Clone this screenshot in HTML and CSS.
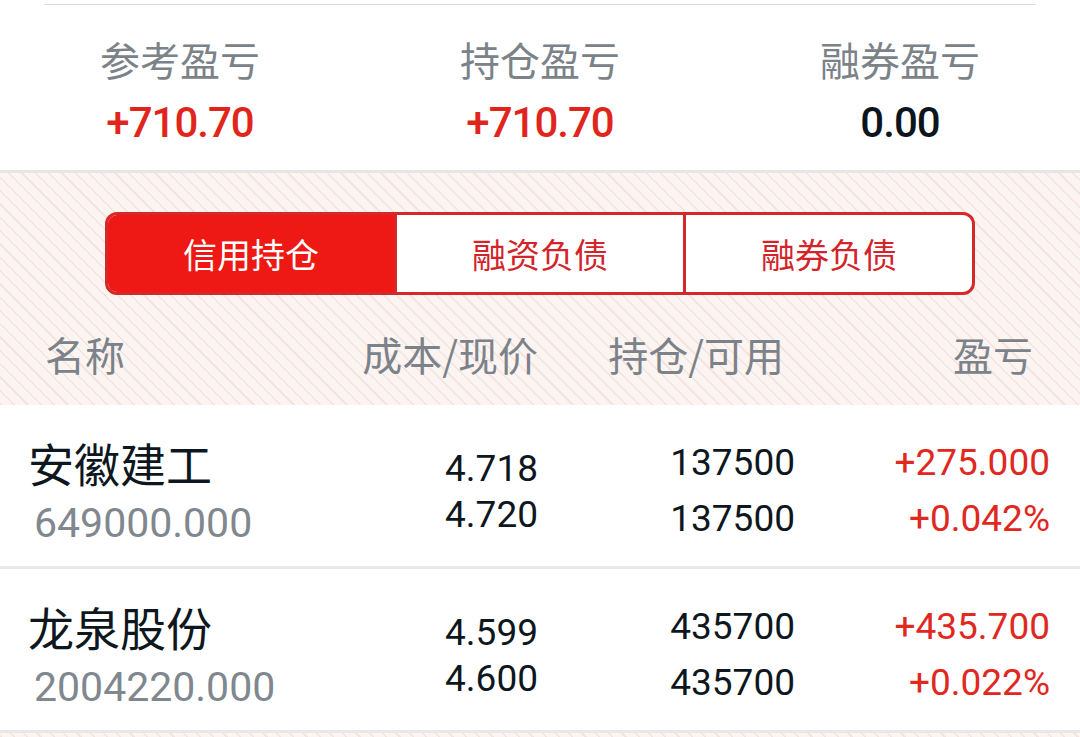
FILE: index.html
```html
<!DOCTYPE html>
<html lang="zh-CN">
<head>
<meta charset="utf-8">
<title>信用持仓</title>
<link rel="stylesheet" href="styles.css">
</head>
<body>
<div class="page">
  <section class="summary">
    <div class="topline"></div>
    <div class="stats">
      <div class="stat">
        <div class="stat-label">参考盈亏</div>
        <div class="stat-value up">+710.70</div>
      </div>
      <div class="stat">
        <div class="stat-label">持仓盈亏</div>
        <div class="stat-value up">+710.70</div>
      </div>
      <div class="stat">
        <div class="stat-label">融券盈亏</div>
        <div class="stat-value">0.00</div>
      </div>
    </div>
  </section>

  <section class="band">
    <div class="tabs">
      <div class="tab active">信用持仓</div>
      <div class="tab">融资负债</div>
      <div class="tab">融券负债</div>
    </div>
    <div class="thead">
      <div class="th th-name">名称</div>
      <div class="th th-cost">成本/现价</div>
      <div class="th th-hold">持仓/可用</div>
      <div class="th th-pnl">盈亏</div>
    </div>
  </section>

  <div class="rows">
    <div class="row">
      <div class="c-name">
        <div class="name">安徽建工</div>
        <div class="code">649000.000</div>
      </div>
      <div class="c-cost">
        <div class="num">4.718</div>
        <div class="num">4.720</div>
      </div>
      <div class="c-hold">
        <div class="num">137500</div>
        <div class="num">137500</div>
      </div>
      <div class="c-pnl">
        <div class="num up">+275.000</div>
        <div class="num up">+0.042%</div>
      </div>
    </div>
    <div class="row">
      <div class="c-name">
        <div class="name">龙泉股份</div>
        <div class="code">2004220.000</div>
      </div>
      <div class="c-cost">
        <div class="num">4.599</div>
        <div class="num">4.600</div>
      </div>
      <div class="c-hold">
        <div class="num">435700</div>
        <div class="num">435700</div>
      </div>
      <div class="c-pnl">
        <div class="num up">+435.700</div>
        <div class="num up">+0.022%</div>
      </div>
    </div>
  </div>
</div>
</body>
</html>
```

FILE: styles.css
```css
html, body {
  margin: 0;
  padding: 0;
}

body {
  min-height: 737px;
  font-family: Roboto, "Noto Sans CJK SC", sans-serif;
  background-color: #fcf4f1;
  background-image: repeating-linear-gradient(45deg, #f4e4e0 0, #f4e4e0 1.6px, #fcf4f1 1.6px, #fcf4f1 9.4px);
}

/* ---------- summary ---------- */
.summary {
  background: #ffffff;
  height: 166px;
  padding-top: 4px;
  border-bottom: 3px solid #e6e6e6;
}

.topline {
  margin: 0 44px;
  height: 1px;
  background: #dadada;
}

.stats {
  display: grid;
  grid-template-columns: repeat(3, 1fr);
  padding-top: 34px;
}

.stat {
  display: flex;
  flex-direction: column;
  align-items: center;
  gap: 23px;
}

.stat-label {
  font-family: "Noto Sans CJK SC", sans-serif;
  font-size: 40px;
  line-height: 1;
  color: #7b8288;
}

.stat-value {
  font-family: Roboto, sans-serif;
  font-size: 42px;
  font-weight: 500;
  line-height: 1;
  letter-spacing: -1px;
  color: #0c151d;
}

.up {
  color: #e0261c;
}

/* ---------- tabs + header band ---------- */
.band {
  padding-top: 39px;
}

.tabs {
  margin: 0 105px;
  height: 83px;
  box-sizing: border-box;
  border: 3px solid #d5282a;
  border-radius: 12px;
  overflow: hidden;
  display: flex;
  background: #ffffff;
}

.tab {
  flex: 1;
  display: flex;
  align-items: center;
  justify-content: center;
  font-family: "Noto Sans CJK SC", sans-serif;
  font-size: 34px;
  line-height: 1;
  color: #d2242a;
}

.tab + .tab {
  border-left: 3px solid #d5282a;
}

.tab.active {
  background: #ee1814;
  color: #ffffff;
}

.thead {
  display: grid;
  grid-template-columns: 300px 238px 257px 1fr;
  padding-right: 30px;
  padding-top: 39px;
  height: 110px;
  box-sizing: border-box;
}

.th {
  font-family: "Noto Sans CJK SC", sans-serif;
  font-size: 40px;
  line-height: 1;
  color: #7b8289;
}

.th-name {
  padding-left: 45px;
}

.th-cost {
  text-align: right;
}

.th-hold {
  text-align: right;
  padding-right: 11px;
}

.th-pnl {
  text-align: right;
  padding-right: 17px;
}

/* ---------- rows ---------- */
.row {
  background: #ffffff;
  height: 161px;
  border-bottom: 3px solid #e8e8ea;
  display: grid;
  grid-template-columns: 300px 238px 257px 1fr;
  padding-right: 30px;
}

.c-name {
  display: flex;
  flex-direction: column;
  align-items: flex-start;
  padding-left: 28px;
  padding-top: 34px;
  gap: 18px;
}

.name {
  font-family: "Noto Sans CJK SC", sans-serif;
  font-size: 46px;
  line-height: 1;
  color: #0e1720;
}

.code {
  font-family: Roboto, sans-serif;
  font-size: 41px;
  line-height: 1;
  color: #80878e;
  margin-left: 6px;
}

.c-cost,
.c-hold,
.c-pnl {
  display: flex;
  flex-direction: column;
  align-items: flex-end;
}

.c-cost {
  padding-top: 45px;
  gap: 9px;
}

.c-hold,
.c-pnl {
  padding-top: 39px;
  gap: 19px;
}

.num {
  font-family: Roboto, sans-serif;
  font-size: 37px;
  line-height: 1;
  color: #0e1720;
}

.num.up {
  color: #e0281f;
}
```
